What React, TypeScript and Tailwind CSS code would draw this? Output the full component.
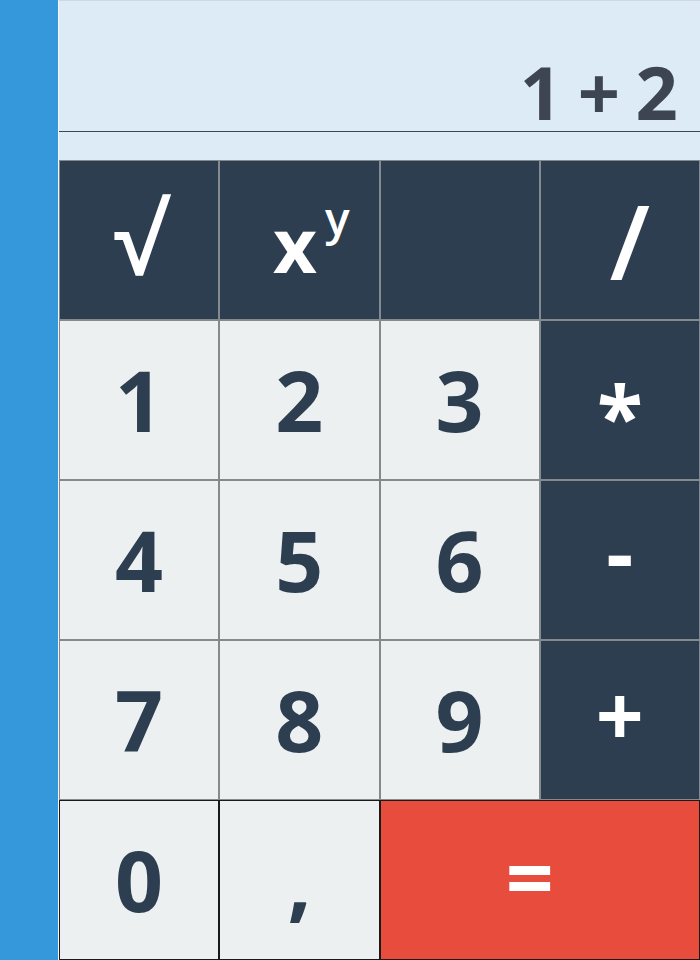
import React from 'react';

type Key = {
  label: React.ReactNode;
  kind: 'op' | 'num' | 'eq';
  span?: boolean;
  last?: boolean;
};

const keys: Key[] = [
  { label: <span className="-mt-1 text-[96px] font-semibold">√</span>, kind: 'op' },
  {
    label: (
      <span className="mt-2 ml-6 flex items-start">
        <span className="text-[76px]">x</span>
        <span className="ml-2 -mt-3 text-[46px] font-semibold leading-none">y</span>
      </span>
    ),
    kind: 'op',
  },
  { label: '', kind: 'op' },
  { label: <span className="ml-5 text-[104px] font-semibold">/</span>, kind: 'op' },
  { label: '1', kind: 'num' },
  { label: '2', kind: 'num' },
  { label: '3', kind: 'num' },
  { label: <span className="mt-[30px]">*</span>, kind: 'op' },
  { label: '4', kind: 'num' },
  { label: '5', kind: 'num' },
  { label: '6', kind: 'num' },
  { label: <span className="-mt-4">-</span>, kind: 'op' },
  { label: '7', kind: 'num' },
  { label: '8', kind: 'num' },
  { label: '9', kind: 'num' },
  { label: <span className="-mt-3">+</span>, kind: 'op' },
  { label: '0', kind: 'num', last: true },
  { label: ',', kind: 'num', last: true },
  { label: <span className="-mt-2">=</span>, kind: 'eq', span: true, last: true },
];

const kindClass = {
  op: 'bg-[#2c3e50] text-white',
  num: 'bg-[#ecf0f1] text-[#2c3e50]',
  eq: 'bg-[#e74c3c] text-white',
};

const App: React.FC = () => {
  return (
    <div className="flex h-[960px] w-[700px] font-['Open_Sans',sans-serif]">
      <aside className="w-[59px] shrink-0 border-r border-[#f2f6fa] bg-[#3498db]" />
      <main className="flex flex-1 flex-col">
        <div className="h-[160px] border-t border-[#cfd8e0] bg-[#ddebf7]">
          <div className="flex h-[131px] items-end justify-end border-b border-[#3c4656] pr-[24px] pb-[2px]">
            <span className="text-[74px] font-bold leading-none tracking-tight text-[#3d4452]">1 + 2</span>
          </div>
        </div>
        <div className="grid flex-1 grid-cols-4 grid-rows-5">
          {keys.map((k, i) => (
            <button
              key={i}
              className={`flex items-center justify-center border text-[84px] font-bold leading-none ${kindClass[k.kind]} ${
                k.span ? 'col-span-2 pr-5' : ''
              } ${k.last ? 'border-[#1a1a1a]' : 'border-[#858a8f]'}`}
            >
              {k.label}
            </button>
          ))}
        </div>
      </main>
    </div>
  );
};

export default App;
